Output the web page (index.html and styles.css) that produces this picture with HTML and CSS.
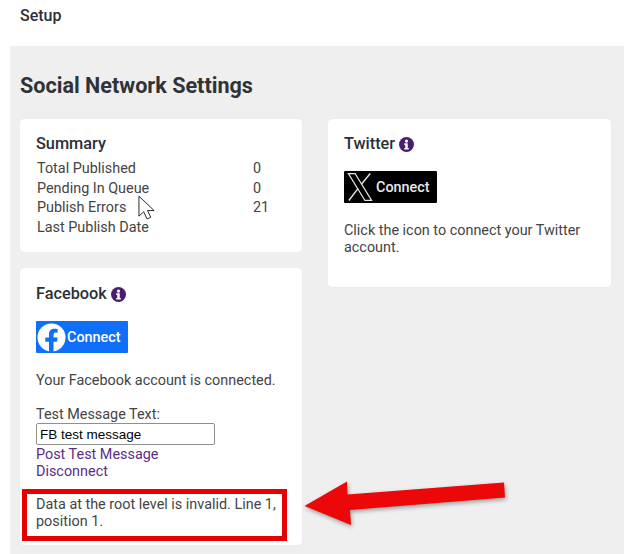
FILE: index.html
```html
<!DOCTYPE html>
<html lang="en">
<head>
    <meta charset="UTF-8">
    <title>Setup</title>
    <link rel="stylesheet" href="styles.css">
</head>
<body>
    <div class="page-title">Setup</div>

    <div class="panel">
        <h1>Social Network Settings</h1>

        <div class="columns">
            <div class="column">
                <div class="card summary">
                    <h2>Summary</h2>
                    <table>
                        <tr><td class="label">Total Published</td><td>0</td></tr>
                        <tr><td class="label">Pending In Queue</td><td>0</td></tr>
                        <tr><td class="label">Publish Errors</td><td>21</td></tr>
                        <tr><td class="label">Last Publish Date</td><td></td></tr>
                    </table>
                </div>

                <div class="card facebook">
                    <h2>Facebook
                        <svg class="info" viewBox="0 0 16 16"><circle cx="8" cy="8" r="8" fill="#4b1d6e"/><circle cx="8" cy="4.300" r="1.700" fill="#fff"/><path d="M5.600 6.700h3.700v5h1.100v1.700H5.600v-1.700h1.100V8.400H5.600z" fill="#fff"/></svg>
                    </h2>
                    <a class="connect connect-fb" href="#">
                        <svg class="fb-logo" viewBox="0 0 30 30"><circle cx="15" cy="15" r="14.5" fill="#fff"/><path d="M20.600 19.300l.7-4.300h-4.200v-2.800c0-1.200.6-2.300 2.400-2.300h1.900V6.200s-1.700-.3-3.400-.3c-3.400 0-5.600 2.100-5.600 5.800V15H8.600v4.300h3.800v10.400c.8.100 1.600.2 2.400.2s1.600-.1 2.300-.2V19.300z" fill="#0f6ffb"/></svg>
                        <span>Connect</span>
                    </a>
                    <p class="status">Your Facebook account is connected.</p>
                    <label for="testMessage">Test Message Text:</label>
                    <input type="text" id="testMessage" value="FB test message">
                    <a class="link" href="#">Post Test Message</a>
                    <a class="link" href="#">Disconnect</a>
                    <p class="result">Data at the root level is invalid. Line 1, position 1.</p>
                </div>
            </div>

            <div class="column">
                <div class="card twitter">
                    <h2>Twitter
                        <svg class="info" viewBox="0 0 16 16"><circle cx="8" cy="8" r="8" fill="#4b1d6e"/><circle cx="8" cy="4.300" r="1.700" fill="#fff"/><path d="M5.600 6.700h3.700v5h1.100v1.700H5.600v-1.700h1.100V8.400H5.600z" fill="#fff"/></svg>
                    </h2>
                    <a class="connect connect-x" href="#">
                        <svg class="x-logo" viewBox="0 0 28 32"><path d="M1.500 1.500h7.200l17.800 29h-7.200z" fill="none" stroke="#e8e8e8" stroke-width="1.300"/><path d="M25 1.500L15.500 13M12 17.500L2 30.500" fill="none" stroke="#e8e8e8" stroke-width="1.500"/></svg>
                        <span>Connect</span>
                    </a>
                    <p class="status">Click the icon to connect your Twitter account.</p>
                </div>
            </div>
        </div>
    </div>

    <!-- annotations on top of the screenshot -->
    <div class="red-box"></div>
    <svg class="arrow" viewBox="0 0 212 50"><path d="M1.500 25L44 0.500l.5 13 156.500-12 1 15-155 12.500 1 15z" fill="#ec0808"/></svg>
    <svg class="cursor" viewBox="0 0 20 28"><path d="M1 1v21l5-4.500 3.500 7.500 4-1.800-3.500-7h7z" fill="#fff" stroke="#222" stroke-width="1"/></svg>
</body>
</html>
```

FILE: styles.css
```css
html, body {
    height: 100%;
}
body {
    font-family: Roboto, sans-serif;
    font-size: 14.4px;
    color: #444;
    margin: 0;
    background-color: white;
    overflow: hidden;
    position: relative;
}
.page-title {
    height: 46px;
    padding: 7px 0 0 20px;
    box-sizing: border-box;
    font-size: 16px;
    line-height: 18px;
    font-weight: 500;
    color: #2b2f36;
}
.panel {
    margin-left: 10px;
    padding: 26px 13px 9px 10px;
    height: 508px;
    box-sizing: border-box;
    background-color: #efefef;
}
h1 {
    margin: 0 0 20px;
    font-size: 21.6px;
    line-height: 27px;
    font-weight: 700;
    color: #2f3338;
}
.columns {
    display: flex;
    gap: 26px;
    align-items: flex-start;
}
.column {
    display: flex;
    flex-direction: column;
    gap: 16px;
}
.column:first-child {
    width: 282px;
}
.column:last-child {
    width: 283px;
}
.card {
    box-sizing: border-box;
    background: white;
    border-radius: 4px;
    box-shadow: 0 0 1px rgba(0,0,0,0.1);
    padding: 14px 16px;
}
h2 {
    margin: 0;
    display: flex;
    align-items: center;
    gap: 4px;
    font-size: 16.3px;
    line-height: 21px;
    font-weight: 500;
    color: #2b2f36;
}
.info {
    width: 15px;
    height: 15px;
    margin-top: 2px;
}
.summary {
    height: 133px;
}
table {
    border-collapse: collapse;
    margin: 5px 0 0 1px;
}
td {
    padding: 0;
    height: 19.500px;
    line-height: 19px;
}
td.label {
    width: 216px;
}
.facebook {
    height: 277px;
    padding-top: 15px;
}
.twitter {
    height: 168px;
}
.connect {
    display: flex;
    align-items: center;
    height: 32px;
    margin-top: 17px;
    box-sizing: border-box;
    border-radius: 1px;
    color: white;
    font-weight: 500;
    font-size: 14.4px;
    text-decoration: none;
}
.connect-fb {
    width: 92px;
    background-color: #0f6ffb;
    padding-left: 1px;
    gap: 1px;
}
.fb-logo {
    width: 29px;
    height: 29px;
}
.connect-x {
    width: 93px;
    background-color: black;
    padding-left: 3px;
    gap: 3px;
}
.connect-x span {
    color: #e8e8e8;
}
.x-logo {
    width: 26px;
    height: 30px;
}
.status {
    margin: 19px 0 0;
    line-height: 17px;
}
.facebook .status {
    margin-bottom: 18px;
}
label {
    display: block;
    line-height: 16px;
}
input {
    display: block;
    box-sizing: border-box;
    width: 179px;
    height: 22px;
    margin-bottom: 1px;
    padding: 0 3px;
    border: 1px solid #8f8f8f;
    border-radius: 2px;
    font-family: "Liberation Sans", sans-serif;
    font-size: 13.500px;
    color: black;
}
.link {
    display: block;
    color: #5b2e86;
    text-decoration: none;
    line-height: 17px;
}
.result {
    margin: 16px 0 0;
    line-height: 17px;
}
.red-box {
    position: absolute;
    left: 22px;
    top: 489px;
    width: 265px;
    height: 52px;
    box-sizing: border-box;
    border: 5px solid #e60000;
}
.arrow {
    position: absolute;
    left: 303px;
    top: 481px;
    width: 212px;
    height: 50px;
    filter: drop-shadow(1px 2px 2px rgba(0,0,0,0.35));
}
.cursor {
    position: absolute;
    left: 138px;
    top: 195px;
    width: 19px;
    height: 27px;
}
```
